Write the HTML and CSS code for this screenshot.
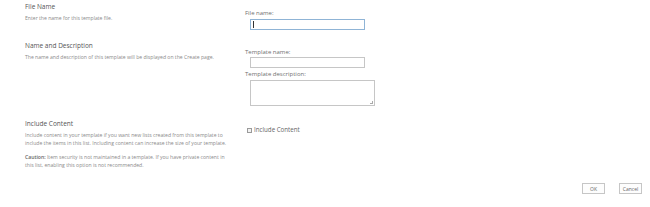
FILE: index.html
```html
<!DOCTYPE html>
<html lang="en">
<head>
    <meta charset="UTF-8">
    <title>Save as Template</title>
    <link rel="stylesheet" href="styles.css">
</head>
<body>
    <div class="form">
        <div class="row row-file">
            <div class="info">
                <h3>File Name</h3>
                <p>Enter the name for this template file.</p>
            </div>
            <div class="fields">
                <label>File name:</label>
                <div class="textbox focused"><span class="caret"></span></div>
            </div>
        </div>

        <div class="row row-name">
            <div class="info">
                <h3>Name and Description</h3>
                <p>The name and description of this template will be displayed on the Create page.</p>
            </div>
            <div class="fields">
                <label>Template name:</label>
                <div class="textbox"></div>
                <label class="second">Template description:</label>
                <div class="textarea"><span class="grip"></span></div>
            </div>
        </div>

        <div class="row row-content">
            <div class="info">
                <h3>Include Content</h3>
                <p>Include content in your template if you want new lists created from this template to include the items in this list. Including content can increase the size of your template.</p>
                <p class="caution"><b>Caution:</b> <span>Item security is not maintained in a template. If you have private content in this list, enabling this option is not recommended.</span></p>
            </div>
            <div class="fields">
                <div class="check"><span class="box"></span>Include Content</div>
            </div>
        </div>

        <div class="buttons">
            <button>OK</button>
            <button>Cancel</button>
        </div>
    </div>
</body>
</html>
```

FILE: styles.css
```css
* {
    margin: 0;
    padding: 0;
    box-sizing: border-box;
}

body {
    font-family: 'Open Sans', 'Noto Sans', sans-serif;
    background: #ffffff;
    color: #444444;
    width: 650px;
    height: 207px;
    overflow: hidden;
}

.form {
    padding-left: 25px;
}

.row {
    display: grid;
    grid-template-columns: 220px 130px;
}

.info h3 {
    font-size: 6.5px;
    font-weight: 400;
    line-height: 8px;
    color: #555555;
}

.info p {
    font-size: 5.1px;
    line-height: 8px;
    color: #8a8a8a;
    margin-top: 3px;
    width: 205px;
}

.info p.caution {
    margin-top: 6px;
}

.info b {
    font-weight: 600;
    color: #666666;
}

.fields label {
    display: block;
    font-size: 6px;
    line-height: 8px;
    color: #707070;
}

.row-file {
    padding-top: 3px;
    height: 42px;
}

.row-file .fields {
    padding-top: 6px;
}

.row-name {
    height: 78px;
}

.row-name .fields {
    padding-top: 6px;
}

.fields .second {
    margin-top: 2px;
}

.textbox {
    width: 115px;
    height: 11px;
    margin: 1px 0 0 5px;
    border: 1px solid #c6c6c6;
    background: #fff;
    position: relative;
}

.textbox.focused {
    margin-top: 2px;
    border-color: #8fb4d6;
}

.caret {
    position: absolute;
    left: 2px;
    top: 1px;
    width: 1px;
    height: 7px;
    background: #333;
}

.textarea {
    width: 125px;
    height: 26px;
    margin: 2px 0 0 5px;
    border: 1px solid #c6c6c6;
    position: relative;
}

.grip {
    position: absolute;
    right: 1px;
    bottom: 1px;
    width: 3px;
    height: 3px;
    border-right: 1px solid #aaa;
    border-bottom: 1px solid #aaa;
}

.row-content .fields {
    padding-top: 6px;
}

.check {
    display: flex;
    align-items: center;
    gap: 2px;
    font-size: 6.2px;
    line-height: 8px;
    color: #666666;
    padding-left: 2px;
}

.box {
    width: 5px;
    height: 5px;
    border: 1px solid #9a9a9a;
    background: #f2f2f2;
}

.buttons {
    display: flex;
    justify-content: flex-end;
    gap: 14px;
    padding-right: 8px;
    margin-top: 14px;
}

.buttons button {
    width: 23px;
    height: 11px;
    border: 1px solid #c6c6c6;
    background: #fdfdfd;
    font-family: inherit;
    font-size: 5px;
    color: #666666;
}
```
